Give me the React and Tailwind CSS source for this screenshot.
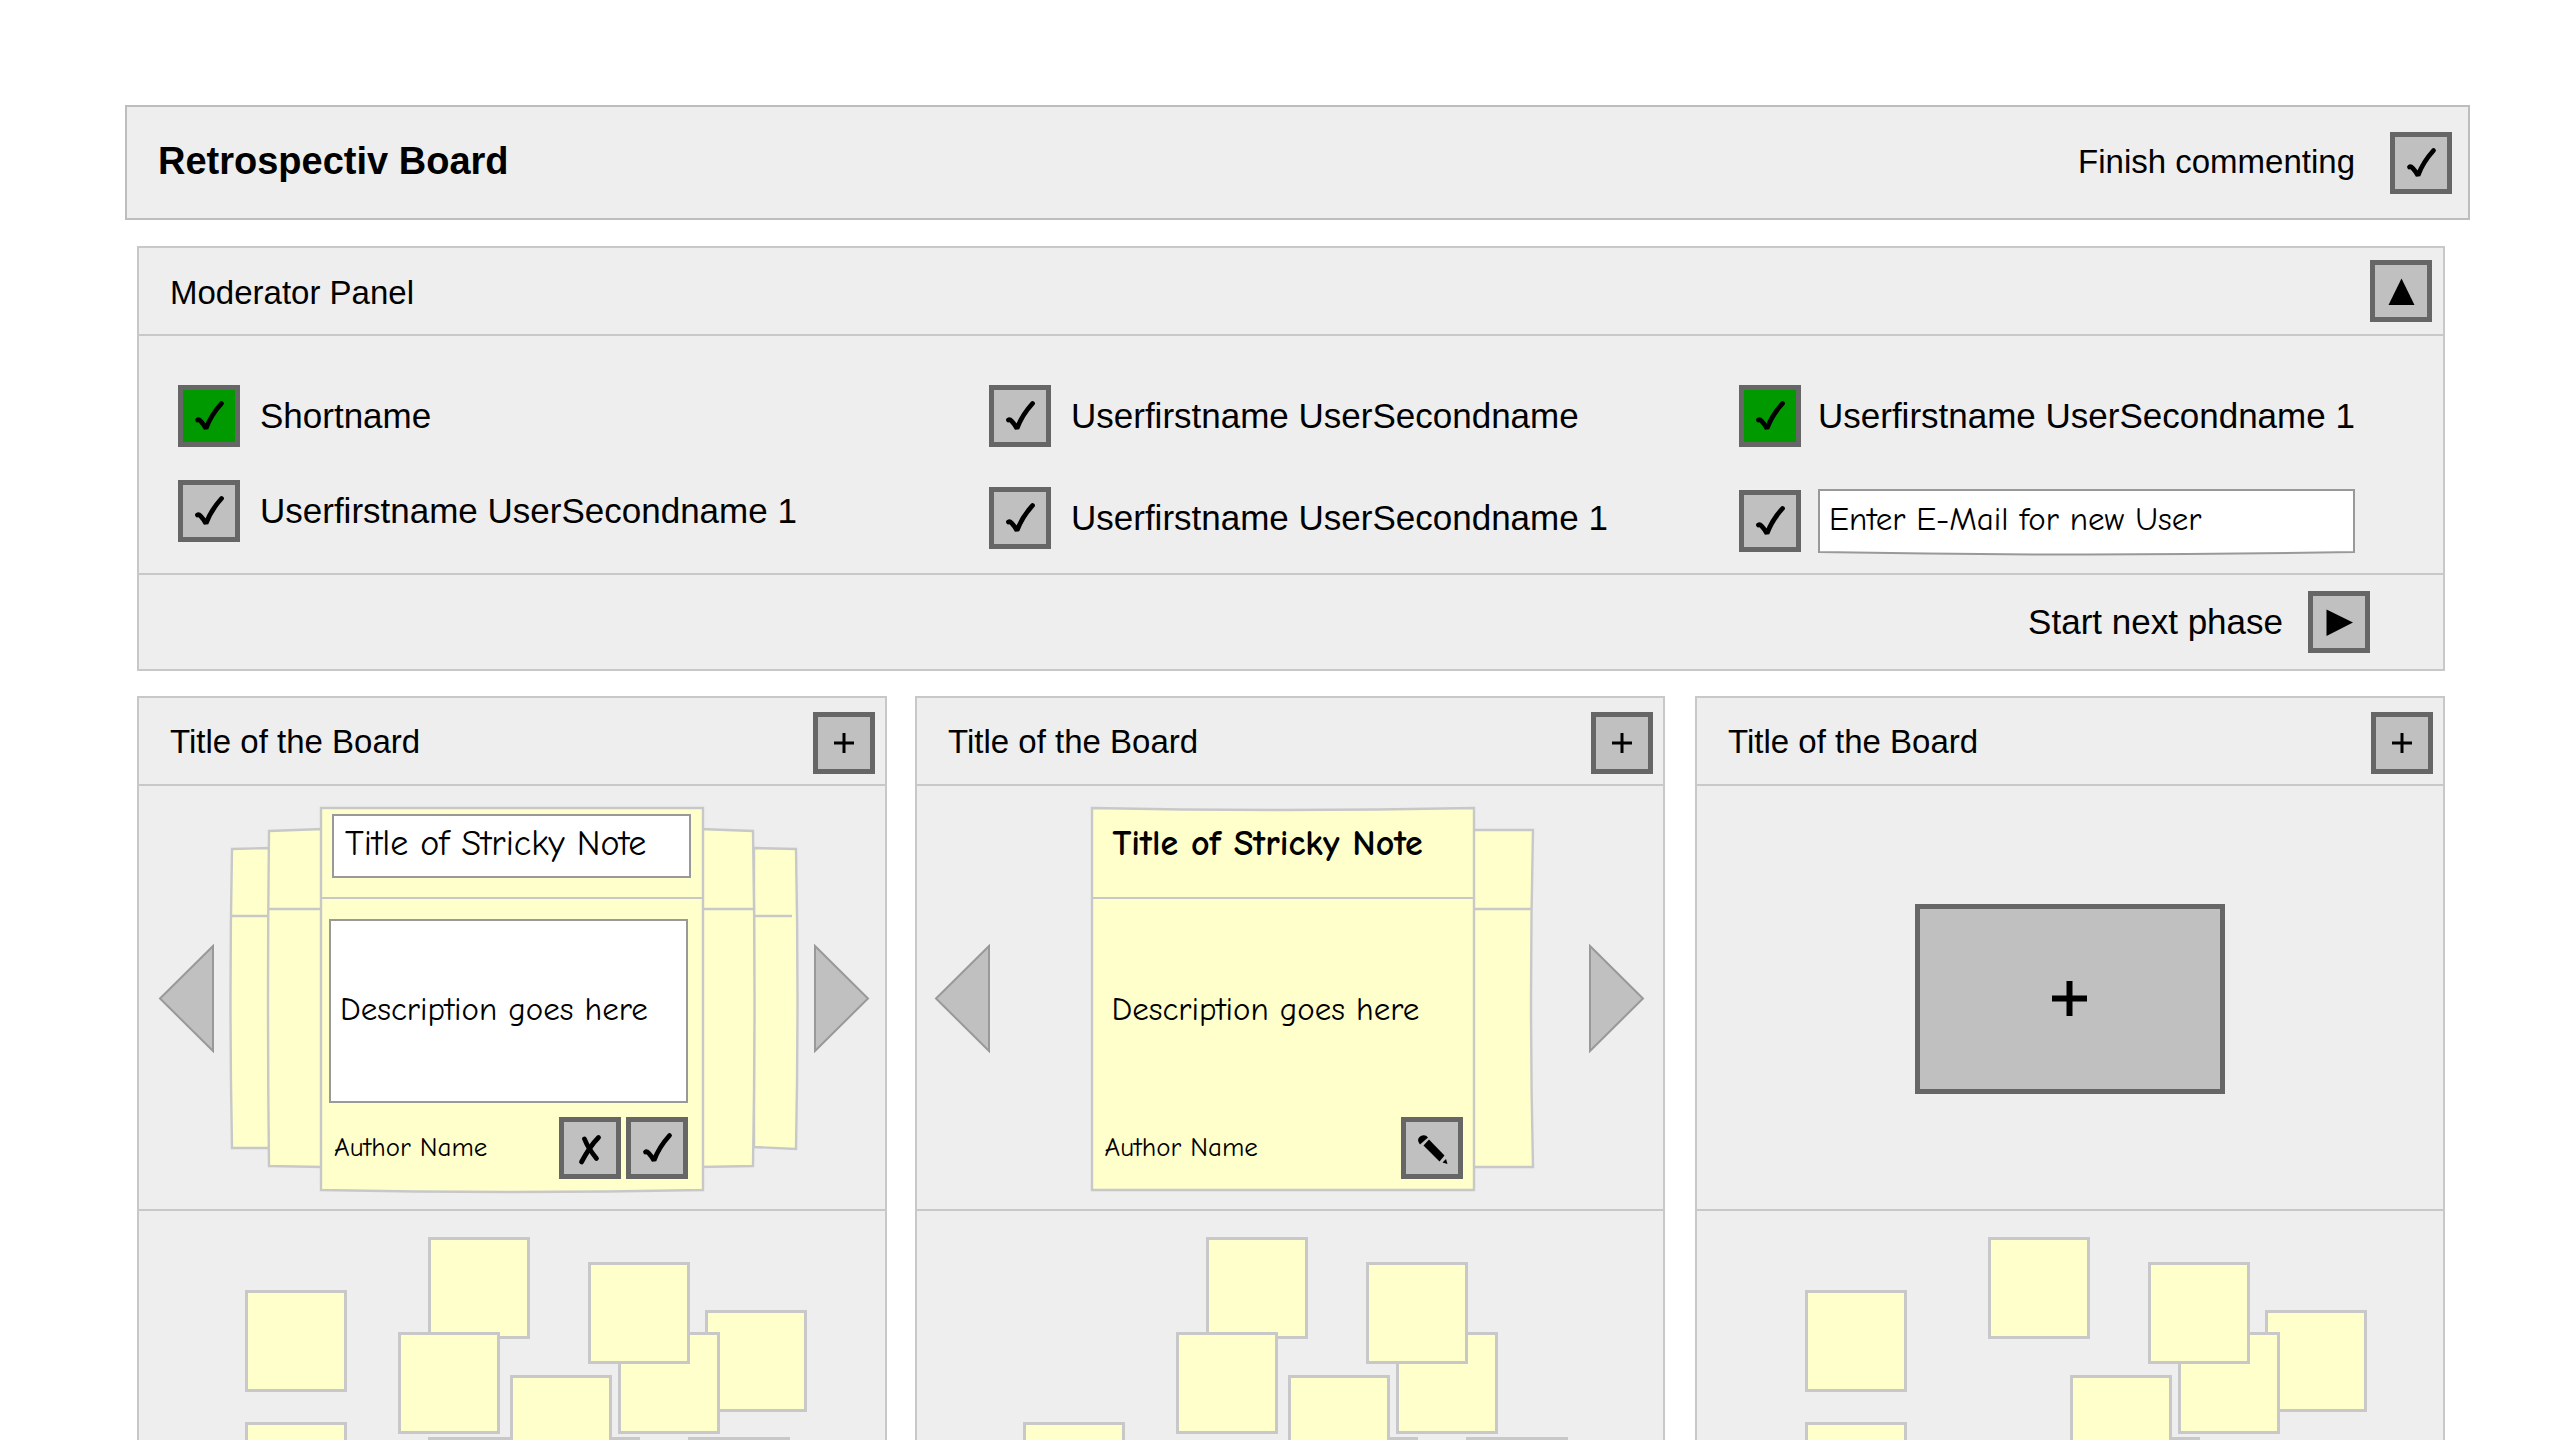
const COMIC = "font-['Comic_Neue','Comic_Sans_MS','Noto_Sans',sans-serif]";

const ICONS = {
  check: <path d="M19.5 35 Q22 33.5 28 43.5 Q33 30 43.5 18.5" fill="none" stroke="#000" strokeWidth="4.8" strokeLinecap="round" strokeLinejoin="bevel" />,
  cross: (
    <g fill="none" stroke="#000" strokeWidth="4.8" strokeLinecap="round">
      <path d="M25.5 22 Q29 31 37.5 41.5" />
      <path d="M39.5 20.5 Q31 29 22.5 45" />
    </g>
  ),
  pencil: (
    <g fill="#000">
      <path d="M19 27.5 Q15 22.5 19 19.5 Q24 16.5 27 20.5 Z" />
      <path d="M28 22.5 L43.5 38.5 L38.5 44.5 L22.5 28.5 Z" />
      <path d="M45 42 L46.5 47 L41.5 45.5 Z" />
    </g>
  ),
  plus: <path d="M31 21 V41 M21 31 H41" stroke="#000" strokeWidth="3" />,
  up: <path d="M31.5 18.5 L44.5 45 H18.5 Z" />,
  play: <path d="M18.5 18.5 L45 31.5 L18.5 45 Z" />,
};

function Icon({ name }) {
  return (
    <svg viewBox="0 0 62 62" className="pointer-events-none col-start-1 row-start-1 size-[62px]" aria-hidden="true">
      {ICONS[name]}
    </svg>
  );
}

function IconButton({ icon, label }) {
  return (
    <button type="button" aria-label={label} className="relative grid size-[62px] shrink-0 place-items-center bg-[#c0c0c0]">
      <Icon name={icon} />
      <span className="col-start-1 row-start-1 size-[62px] border-5 border-[#666]" />
    </button>
  );
}

function Tick({ id, checked, label }) {
  return (
    <span className="grid shrink-0 place-items-center">
      <input
        id={id}
        type="checkbox"
        defaultChecked={checked}
        aria-label={label}
        className="col-start-1 row-start-1 size-[62px] appearance-none border-5 border-[#666] bg-[#c0c0c0] checked:bg-[#009900]"
      />
      <Icon name="check" />
    </span>
  );
}

function User({ id, name, checked, gap = "gap-[20px]" }) {
  return (
    <div className={`flex items-center ${gap}`}>
      <Tick id={id} checked={checked} />
      <label htmlFor={id} className="text-[35px] leading-[40px] whitespace-nowrap">{name}</label>
    </div>
  );
}

function ModeratorPanel() {
  return (
    <section className="mt-[26px] mr-[25px] ml-3 border-2 border-[#c8c8c8] bg-[#eee]">
      <div className="flex h-[86px] items-center justify-between pr-[11px] pl-[31px]">
        <h2 className="pt-1 text-[33px] leading-[40px]">Moderator Panel</h2>
        <IconButton icon="up" label="Collapse panel" />
      </div>
      <div className="grid h-[241px] grid-cols-[811fr_750fr_616fr] items-start border-y-2 border-[#c8c8c8] pt-[49px] pr-[88px] pl-[39px]">
        <div className="flex flex-col gap-[33px]">
          <User id="u1" name="Shortname" checked />
          <User id="u2" name="Userfirstname UserSecondname 1" />
        </div>
        <div className="flex flex-col gap-[40px]">
          <User id="u3" name="Userfirstname UserSecondname" />
          <User id="u4" name="Userfirstname UserSecondname 1" />
        </div>
        <div className="flex flex-col gap-[42px]">
          <User id="u5" name="Userfirstname UserSecondname 1" checked gap="gap-[17px]" />
          <div className="flex items-center gap-[17px]">
            <Tick id="u6" label="Add new user" />
            <div className="relative h-[63px] flex-1">
              <svg viewBox="0 0 536 63" preserveAspectRatio="none" className="absolute inset-0 size-full overflow-visible" aria-hidden="true">
                <path d="M1 1 H535 V63 Q268 68 1 63 Z" fill="#fff" stroke="#999" strokeWidth="2" />
              </svg>
              <input
                type="text"
                aria-label="E-Mail for new user"
                placeholder="Enter E-Mail for new User"
                className={`relative h-[60px] w-full bg-transparent pl-[11px] text-[33px] text-black outline-none placeholder:text-black ${COMIC}`}
              />
            </div>
          </div>
        </div>
      </div>
      <div className="flex h-[94px] items-center justify-end gap-[25px] pr-[73px]">
        <span className="text-[35px] leading-[40px]">Start next phase</span>
        <IconButton icon="play" label="Start next phase" />
      </div>
    </section>
  );
}

function Arrow({ dir }) {
  return (
    <button type="button" aria-label={dir === "left" ? "Previous note" : "Next note"} className="shrink-0">
      <svg viewBox="0 0 57 109" className="h-[109px] w-[57px]" aria-hidden="true">
        <path d={dir === "left" ? "M2 54.5 L55 2 V107 Z" : "M2 2 L55 54.5 L2 107 Z"} fill="#c0c0c0" stroke="#999" strokeWidth="2" />
      </svg>
    </button>
  );
}

const FLAP = { fill: "#ffffcc", stroke: "#c8c8c8", strokeWidth: 2.4 };

function NoteSheet({ d, children }) {
  return (
    <article className="relative z-10 w-[384px] shrink-0 p-[2px]">
      <svg viewBox="0 0 384 385" preserveAspectRatio="none" className="absolute inset-0 size-full overflow-visible" aria-hidden="true">
        <path d={d} {...FLAP} />
      </svg>
      <div className={`relative ${COMIC}`}>{children}</div>
    </article>
  );
}

function EditStack() {
  return (
    <div className="flex items-center">
      <svg viewBox="0 0 37 303" className="h-[303px] w-[37px] overflow-visible" aria-hidden="true">
        <path d="M40 1 L2 2 Q-1 150 2 301 L40 301 Z M1 69 H40" {...FLAP} />
      </svg>
      <svg viewBox="0 0 53 339" className="relative h-[339px] w-[53px] overflow-visible" aria-hidden="true">
        <path d="M56 0 L2 2 Q0 170 2 337 L56 338 Z M1 80 H56" {...FLAP} />
      </svg>
      <NoteSheet d="M1 1 H383 V384 Q192 388 1 384 Z">
        <div className="h-[90px] border-b-2 border-[#c8c8c8] pt-[5px] pl-[10px]">
          <input
            type="text"
            aria-label="Note title"
            defaultValue="Title of Stricky Note"
            className="block h-[64px] w-[359px] border-2 border-[#999] bg-white pb-1 pl-[11px] text-[36px]"
          />
        </div>
        <div className="pt-[20px] pr-[14px] pb-[10px] pl-[7px]">
          <textarea
            aria-label="Note description"
            defaultValue="Description goes here"
            className="block h-[184px] w-full resize-none overflow-hidden border-2 border-[#999] bg-white px-[9px] pt-[68px] text-[33px] leading-[40px]"
          />
          <div className="mt-[14px] flex items-center gap-[5px]">
            <span className="mr-auto pl-[5px] text-[27px] leading-[32px]">Author Name</span>
            <IconButton icon="cross" label="Discard" />
            <IconButton icon="check" label="Save" />
          </div>
        </div>
      </NoteSheet>
      <svg viewBox="0 0 50 339" className="relative h-[339px] w-[50px] overflow-visible" aria-hidden="true">
        <path d="M-4 0 L49 2 Q52 170 49 337 L-4 338 Z M-4 80 H49" {...FLAP} />
      </svg>
      <svg viewBox="0 0 44 303" className="h-[303px] w-[44px] overflow-visible" aria-hidden="true">
        <path d="M0 1 L42 2 Q45 150 42 302 L0 300 Z M1 69 H38" {...FLAP} />
      </svg>
    </div>
  );
}

function ReadStack() {
  return (
    <div className="flex items-center pl-[45px]">
      <NoteSheet d="M1 1 Q192 5 383 1 V384 H1 Z">
        <div className="h-[90px] border-b-2 border-[#c8c8c8] pt-[15px] pl-[20px]">
          <h3 className="text-[36px] leading-[40px] font-bold">Title of Stricky Note</h3>
        </div>
        <div className="pt-[20px] pr-[10px] pb-[10px] pl-[10px]">
          <p className="h-[184px] px-[9px] pt-[70px] text-[33px] leading-[40px]">Description goes here</p>
          <div className="mt-[14px] flex items-center">
            <span className="mr-auto pl-[2px] text-[27px] leading-[32px]">Author Name</span>
            <IconButton icon="pencil" label="Edit note" />
          </div>
        </div>
      </NoteSheet>
      <svg viewBox="0 0 59 339" className="h-[339px] w-[59px] overflow-visible" aria-hidden="true">
        <path d="M-3 1 H58 Q54 170 58 338 H-3 Z M-3 80 H56" {...FLAP} />
      </svg>
    </div>
  );
}

const SPOTS = {
  A: [106, 79], B: [289, 26], D: [566, 99], F: [479, 121], C: [449, 51], E: [259, 121],
  H: [106, 211], I: [289, 226], J: [399, 226], K: [549, 226], G: [371, 164],
};

function Board({ id, spots, className = "", stage = "pr-[18px] pl-[17px]", canvas = "", children }) {
  return (
    <section className={`flex min-w-0 flex-1 flex-col border-2 border-b-0 border-[#c8c8c8] bg-[#eee] ${className}`}>
      <div className="flex h-[88px] shrink-0 items-center justify-between border-b-2 border-[#c8c8c8] pt-1 pr-[10px] pl-[31px]">
        <h2 className="pb-[2px] text-[33px] leading-[40px]">Title of the Board</h2>
        <IconButton icon="plus" label="Add note" />
      </div>
      <div className={`flex min-h-[425px] shrink-0 items-center border-b-2 border-[#c8c8c8] pt-[20px] pb-[18px] ${stage}`}>
        {children}
      </div>
      <div className={`relative min-h-0 flex-1 overflow-hidden ${canvas}`}>
        {spots.split("").map((s) => (
          <div
            key={id + s}
            className="absolute size-[102px] border-[3px] border-[#c8c8c8] bg-[#ffffcc]"
            style={{ left: SPOTS[s][0], top: SPOTS[s][1] }}
          />
        ))}
      </div>
    </section>
  );
}

export default function App() {
  return (
    <main className="flex h-screen flex-col overflow-hidden bg-white pt-[105px] pr-[90px] pl-[125px] font-['Liberation_Sans',Arial,sans-serif] text-black">
      <header className="flex h-[115px] shrink-0 items-center border-2 border-[#bdbdbd] bg-[#eee] pr-4 pl-[31px]">
        <h1 className="mr-auto pb-1 text-[38px] leading-[44px] font-bold">Retrospectiv Board</h1>
        <label htmlFor="finish" className="pr-[35px] pb-[2px] text-[33px] leading-[40px]">Finish commenting</label>
        <Tick id="finish" />
      </header>

      <ModeratorPanel />

      <div className="mt-[25px] mr-[25px] ml-3 flex min-h-0 flex-1">
        <Board id="one" spots="ABDFCEHIJKG" stage="pr-[15px] pl-[19px]">
          <div className="flex w-full items-center justify-between">
            <Arrow dir="left" />
            <EditStack />
            <Arrow dir="right" />
          </div>
        </Board>
        <Board id="two" spots="BFCEHJKG" className="ml-7">
          <div className="flex w-full items-center justify-between">
            <Arrow dir="left" />
            <ReadStack />
            <Arrow dir="right" />
          </div>
        </Board>
        <Board id="three" spots="ABDFCHJG" className="ml-[30px]" canvas="ml-[2px]">
          <button type="button" aria-label="Add first note" className="mx-auto grid h-[190px] w-[310px] place-items-center border-5 border-[#666] bg-[#c0c0c0]">
            <svg viewBox="0 0 35 35" className="size-[35px]" aria-hidden="true">
              <path d="M17.5 0 V35 M0 17.5 H35" stroke="#000" strokeWidth="6" />
            </svg>
          </button>
        </Board>
      </div>
    </main>
  );
}
